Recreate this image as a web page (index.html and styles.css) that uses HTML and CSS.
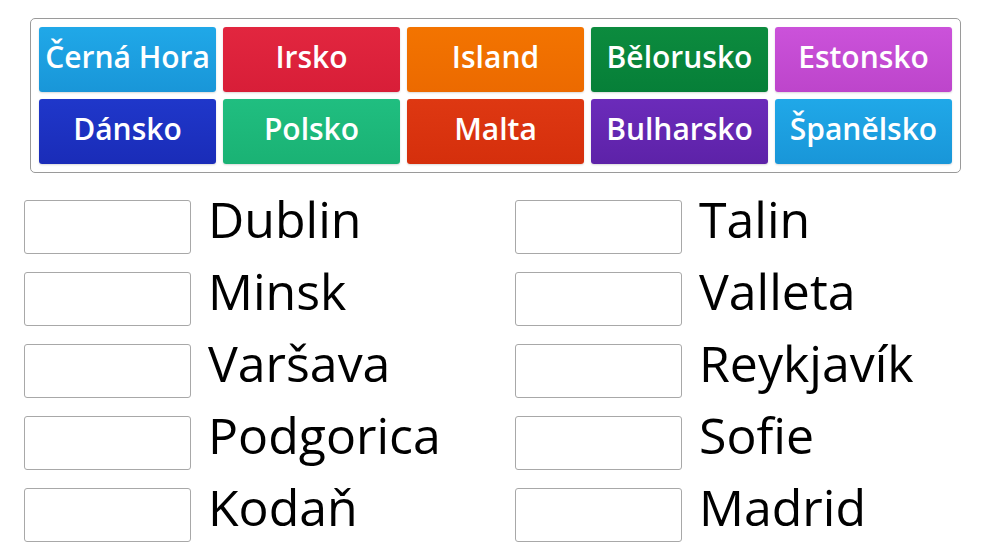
FILE: index.html
```html
<!DOCTYPE html>
<html lang="cs">
<head>
    <meta charset="UTF-8">
    <title>Hlavní města Evropy</title>
    <link rel="stylesheet" href="styles.css">
</head>
<body>

<div class="bank">
    <div class="tile sky">Černá Hora</div>
    <div class="tile red">Irsko</div>
    <div class="tile orange">Island</div>
    <div class="tile green">Bělorusko</div>
    <div class="tile pink">Estonsko</div>
    <div class="tile blue">Dánsko</div>
    <div class="tile teal">Polsko</div>
    <div class="tile rust">Malta</div>
    <div class="tile purple">Bulharsko</div>
    <div class="tile sky">Španělsko</div>
</div>

<div class="answers">
    <div class="col">
        <div class="row"><div class="slot"></div><span class="city">Dublin</span></div>
        <div class="row"><div class="slot"></div><span class="city">Minsk</span></div>
        <div class="row"><div class="slot"></div><span class="city">Varšava</span></div>
        <div class="row"><div class="slot"></div><span class="city">Podgorica</span></div>
        <div class="row"><div class="slot"></div><span class="city">Kodaň</span></div>
    </div>
    <div class="col">
        <div class="row"><div class="slot"></div><span class="city">Talin</span></div>
        <div class="row"><div class="slot"></div><span class="city">Valleta</span></div>
        <div class="row"><div class="slot"></div><span class="city">Reykjavík</span></div>
        <div class="row"><div class="slot"></div><span class="city">Sofie</span></div>
        <div class="row"><div class="slot"></div><span class="city">Madrid</span></div>
    </div>
</div>

</body>
</html>
```

FILE: styles.css
```css
body {
    margin: 0;
    font-family: "Open Sans", "Noto Sans", sans-serif;
    background: #fff;
    color: #000;
}

/* word bank */
.bank {
    box-sizing: border-box;
    width: 931px;
    margin: 18px 0 0 30px;
    padding: 8px;
    border: 1px solid #9a9a9a;
    border-radius: 5px;
    display: grid;
    grid-template-columns: repeat(5, 177px);
    grid-auto-rows: 65px;
    gap: 7px;
}
.tile {
    display: flex;
    align-items: center;
    justify-content: center;
    padding-bottom: 6px;
    box-sizing: border-box;
    border-radius: 3px;
    color: #fff;
    font-size: 30px;
    font-weight: 600;
    white-space: nowrap;
    box-shadow: 0 1px 2px rgba(0, 0, 0, 0.15);
}
.sky { background: linear-gradient(#20a8e8, #1996d8); }
.red { background: linear-gradient(#e2263f, #d81e38); }
.orange { background: linear-gradient(#f37400, #ec6a00); }
.green { background: linear-gradient(#0c8b3e, #067f38); }
.pink { background: linear-gradient(#cb52da, #bd45cb); }
.blue { background: linear-gradient(#1f37ca, #1a2cb8); }
.teal { background: linear-gradient(#20be80, #1ab274); }
.rust { background: linear-gradient(#de3812, #d52f0c); }
.purple { background: linear-gradient(#6b2bba, #5d22a8); }

/* matching rows */
.answers {
    display: grid;
    grid-template-columns: 491px 471px;
    padding-left: 24px;
    margin-top: 27px;
}
.col {
    display: flex;
    flex-direction: column;
    gap: 18px;
}
.row {
    display: flex;
    align-items: flex-start;
    gap: 17px;
}
.slot {
    box-sizing: border-box;
    width: 167px;
    height: 54px;
    border: 1px solid #a8a8a8;
    border-radius: 3px;
    background: #fff;
    flex: none;
}
.city {
    font-size: 50px;
    line-height: 38px;
    white-space: nowrap;
}
```
